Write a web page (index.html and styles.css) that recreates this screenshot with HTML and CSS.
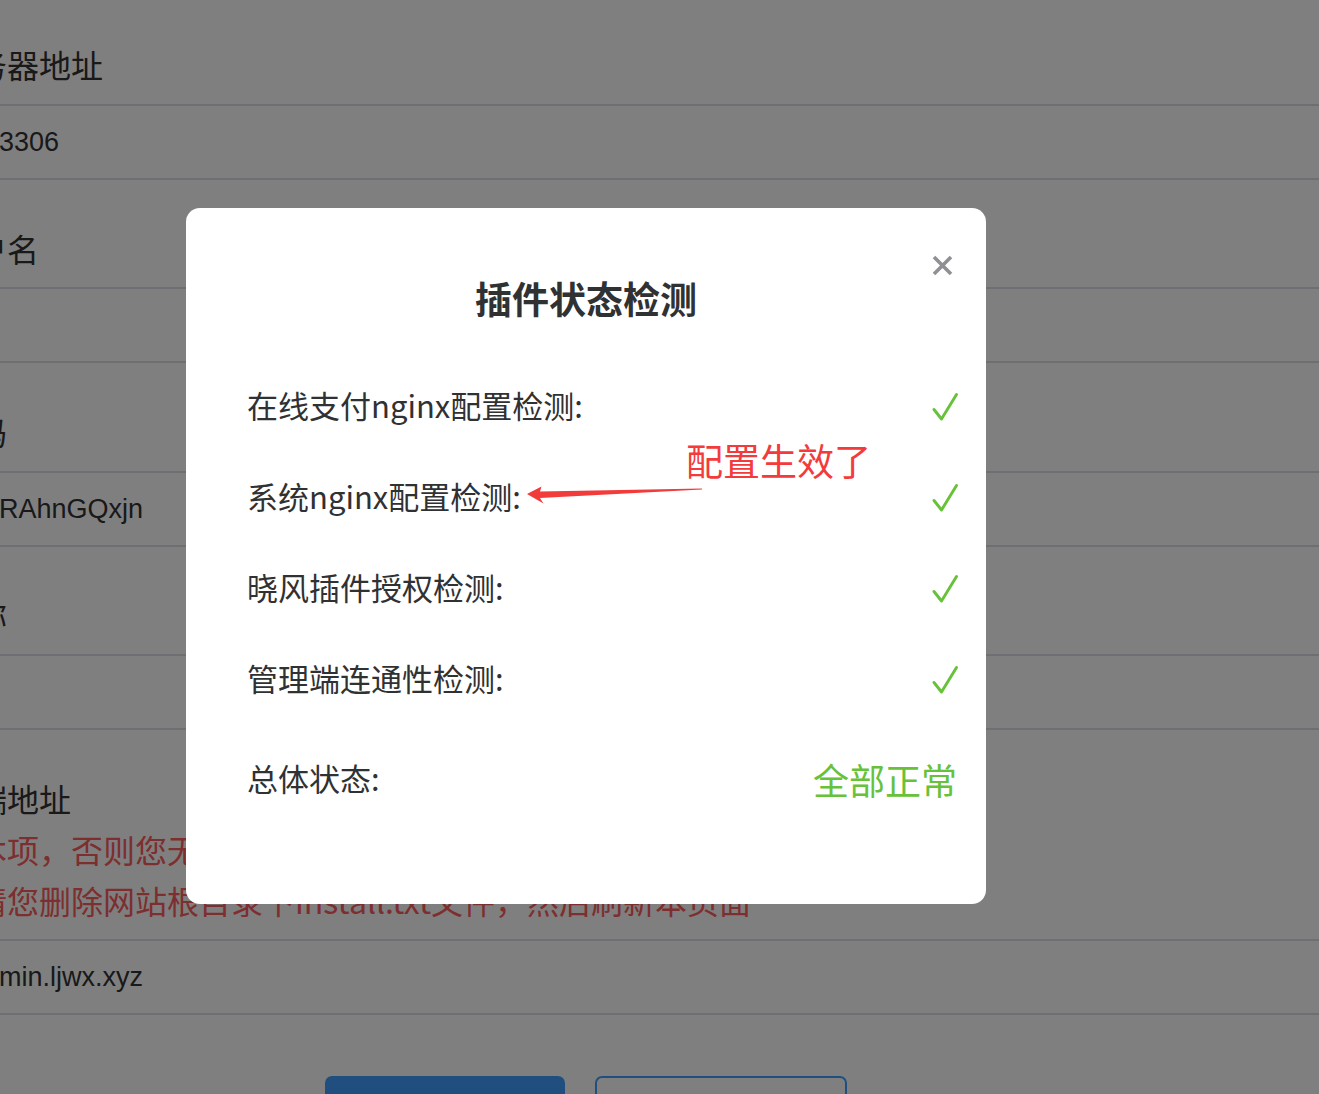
FILE: index.html
```html
<!DOCTYPE html>
<html lang="zh-CN">
<head>
<meta charset="utf-8">
<title>插件状态检测</title>
<link rel="stylesheet" href="styles.css">
</head>
<body>
<div class="page">
  <div class="form">
    <div class="label">数据库服务器地址</div>
    <div class="input">3306</div>
    <div class="label">数据库用户名</div>
    <div class="input"></div>
    <div class="label">数据库密码</div>
    <div class="input">RAhnGQxjn</div>
    <div class="label">数据库名称</div>
    <div class="input"></div>
    <div class="label label-tall">
      <div class="label-text">后台管理端地址</div>
      <div class="tip">必须填写本项，否则您无法正常访问管理后台</div>
      <div class="tip">安装完毕请您删除网站根目录下install.txt文件，然后刷新本页面</div>
    </div>
    <div class="input">min.ljwx.xyz</div>
    <div class="actions">
      <button class="btn btn-primary" type="button"></button>
      <button class="btn btn-plain" type="button"></button>
    </div>
  </div>
</div>

<div class="overlay">
  <div class="dialog">
    <button class="close" type="button" aria-label="关闭">
      <svg width="21" height="21" viewBox="0 0 21 21"><path d="M2 2 L19 19 M19 2 L2 19" stroke="#8e9096" stroke-width="3.6" fill="none"/></svg>
    </button>
    <h2 class="title">插件状态检测</h2>
    <div class="rows">
      <div class="row"><span class="row-label">在线支付nginx配置检测:</span><svg class="check" width="26" height="30" viewBox="0 0 26 30"><path d="M2 17.5 L9.5 27 L24.5 2.5" stroke="#67c23a" stroke-width="2.9" fill="none" stroke-linecap="round" stroke-linejoin="round"/></svg></div>
      <div class="row"><span class="row-label">系统nginx配置检测:</span><svg class="check" width="26" height="30" viewBox="0 0 26 30"><path d="M2 17.5 L9.5 27 L24.5 2.5" stroke="#67c23a" stroke-width="2.9" fill="none" stroke-linecap="round" stroke-linejoin="round"/></svg></div>
      <div class="row"><span class="row-label">晓风插件授权检测:</span><svg class="check" width="26" height="30" viewBox="0 0 26 30"><path d="M2 17.5 L9.5 27 L24.5 2.5" stroke="#67c23a" stroke-width="2.9" fill="none" stroke-linecap="round" stroke-linejoin="round"/></svg></div>
      <div class="row"><span class="row-label">管理端连通性检测:</span><svg class="check" width="26" height="30" viewBox="0 0 26 30"><path d="M2 17.5 L9.5 27 L24.5 2.5" stroke="#67c23a" stroke-width="2.9" fill="none" stroke-linecap="round" stroke-linejoin="round"/></svg></div>
      <div class="row row-total"><span class="row-label">总体状态:</span><span class="status-ok">全部正常</span></div>
    </div>
    <div class="note">配置生效了</div>
    <svg class="note-arrow" width="176" height="22" viewBox="0 0 176 22"><polygon points="0,10 14.5,2.5 13,7.6 175,4.4 175,5.6 13,14 16.5,19.5" fill="#f23b3b"/></svg>
  </div>
</div>
</body>
</html>
```
FILE: styles.css
```css
html, body {
  margin: 0;
  padding: 0;
}
body {
  width: 1319px;
  height: 1094px;
  overflow: hidden;
  background: #ffffff;
  font-family: "Noto Sans CJK SC", "Noto Sans", sans-serif;
  color: #333333;
}
.page {
  width: 1319px;
  height: 1094px;
  overflow: hidden;
}
.form {
  width: 1478px;
  margin-left: -153px;
  margin-top: -4px;
}
.label {
  box-sizing: border-box;
  height: 109.5px;
  padding-top: 46px;
  font-size: 32px;
  line-height: 44px;
  border-bottom: 2px solid #dcdfe6;
  white-space: nowrap;
}
.label-tall {
  height: 211px;
}
.tip {
  margin-top: 4px;
  margin-bottom: -4px;
  font-size: 32px;
  line-height: 51px;
  color: #fa5c5c;
  white-space: nowrap;
}
.input {
  box-sizing: border-box;
  height: 74px;
  padding-left: 152px;
  font-family: "Liberation Sans", Arial, sans-serif;
  font-size: 27px;
  line-height: 72px;
  border-bottom: 2px solid #dcdfe6;
  white-space: nowrap;
}
.actions {
  display: flex;
  justify-content: center;
  gap: 30px;
  padding-top: 61px;
}
.btn {
  box-sizing: border-box;
  height: 60px;
  border-radius: 7px;
  font-size: 24px;
}
.btn-primary {
  width: 240px;
  background: #409eff;
  border: 2px solid #409eff;
}
.btn-plain {
  width: 252px;
  background: #ffffff;
  border: 2px solid #409eff;
}

.overlay {
  position: fixed;
  inset: 0;
  background: rgba(0, 0, 0, 0.5);
  display: flex;
  align-items: flex-start;
  padding: 208px 0 0 186px;
}
.dialog {
  position: relative;
  box-sizing: border-box;
  width: 800px;
  height: 696px;
  background: #ffffff;
  border-radius: 14px;
  padding-top: 64px;
}
.close {
  position: absolute;
  top: 255px;
  top: 47px;
  right: 33px;
  width: 21px;
  height: 21px;
  padding: 0;
  border: 0;
  background: transparent;
  display: flex;
}
.title {
  margin: 0;
  text-align: center;
  font-size: 37px;
  font-weight: 700;
  line-height: 52px;
  color: #303133;
}
.rows {
  margin-top: 37.5px;
  padding: 0 29px 0 61px;
}
.row {
  display: flex;
  align-items: center;
  justify-content: space-between;
  height: 91px;
}
.row-label {
  font-size: 31px;
  line-height: 44px;
  padding-bottom: 4px;
  color: #303133;
  white-space: nowrap;
}
.check {
  display: block;
  margin-right: -1px;
}
.row-total {
  margin-top: 9px;
}
.status-ok {
  font-size: 36px;
  line-height: 48px;
  padding-bottom: 2px;
  color: #67c23a;
  white-space: nowrap;
}
.note {
  position: absolute;
  left: 500px;
  top: 230px;
  font-size: 37px;
  line-height: 44px;
  color: #f33b3b;
  white-space: nowrap;
}
.note-arrow {
  position: absolute;
  left: 341px;
  top: 276px;
}
```
